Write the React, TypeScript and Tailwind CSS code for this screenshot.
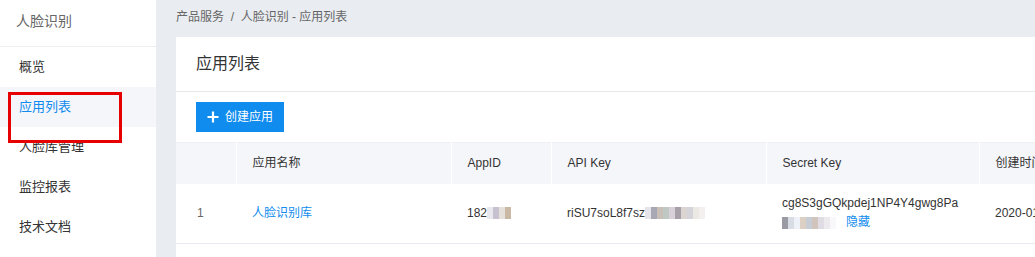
import React from "react";

const menu = ["概览", "应用列表", "人脸库管理", "监控报表", "技术文档"];

function Mosaic({ cells }: { cells: string[] }) {
  return (
    <span className="inline-flex items-center h-[12px]">
      {cells.map((c, i) => (
        <span key={i} className="inline-block w-[6px] h-[12px]" style={{ background: c }} />
      ))}
    </span>
  );
}

export default function App() {
  return (
    <div
      className="relative flex w-[1035px] h-[257px] overflow-hidden bg-[#e9ecf1] text-[12px] text-[#333]"
      style={{ fontFamily: '"Liberation Sans", "Noto Sans CJK SC", sans-serif' }}
    >
      {/* Sidebar */}
      <aside className="w-[156px] shrink-0 bg-white">
        <div className="h-[47px] border-b border-[#eceef2] pl-[16px] flex items-center text-[14px] text-[#666] pb-[3px]">
          人脸识别
        </div>
        <ul>
          {menu.map((m, i) => (
            <li
              key={m}
              className={`h-[40px] flex items-center pl-[19px] text-[13px] ${
                i === 1 ? "bg-[#f5f6fa] text-[#108cee]" : "text-[#333]"
              }`}
            >
              {m}
            </li>
          ))}
        </ul>
      </aside>

      {/* Main */}
      <main className="flex-1 pl-[20px] flex flex-col min-w-0">
        <div className="h-[37px] flex items-center text-[12px] text-[#666] pb-[3px]">
          产品服务&nbsp;&nbsp;/&nbsp;&nbsp;人脸识别 - 应用列表
        </div>
        <section className="flex-1 bg-white overflow-hidden">
          <div className="h-[55px] border-b border-[#e8e8ec] flex items-center pl-[20px] text-[16px] text-[#333]">
            应用列表
          </div>
          <div className="pt-[10px] pl-[20px] pb-[10px]">
            <button className="h-[30px] w-[88px] bg-[#108cee] text-white text-[12px] flex items-center justify-center gap-[6px]">
              <svg width="12" height="12" viewBox="0 0 12 12">
                <path d="M6 0.5v11M0.5 6h11" stroke="white" strokeWidth="2.2" />
              </svg>
              创建应用
            </button>
          </div>
          <table className="w-[923px] min-w-[923px] table-fixed border-collapse text-left whitespace-nowrap">
            <colgroup>
              <col className="w-[60px]" />
              <col className="w-[215px]" />
              <col className="w-[100px]" />
              <col className="w-[215px]" />
              <col className="w-[213px]" />
              <col className="w-[120px]" />
            </colgroup>
            <thead>
              <tr className="h-[41px] bg-[#f5f6fa] border-t border-[#eef0f4]">
                <th className="font-normal border-r border-white"></th>
                <th className="font-normal pl-[16px] border-r border-white">应用名称</th>
                <th className="font-normal pl-[16px] border-r border-white">AppID</th>
                <th className="font-normal pl-[16px] border-r border-white">API Key</th>
                <th className="font-normal pl-[16px] border-r border-white">Secret Key</th>
                <th className="font-normal pl-[16px]">创建时间</th>
              </tr>
            </thead>
            <tbody>
              <tr className="h-[60px] border-b border-[#e8eaf0]">
                <td className="pl-[21px] text-[#666]">1</td>
                <td className="pl-[16px] text-[#108cee]">人脸识别库</td>
                <td className="pl-[16px] text-[#333]">
                  <span className="inline-flex items-center">
                    182
                    <Mosaic cells={["#e8e8ee", "#c8c2d0", "#e6e0da", "#c9b8a4"]} />
                  </span>
                </td>
                <td className="pl-[16px] text-[#333]">
                  <span className="inline-flex items-center">
                    riSU7soL8f7sz
                    <Mosaic
                      cells={["#e4e4ea", "#a8a8b4", "#c8c0b8", "#c0c8c4", "#d8d0d8", "#a8a0a8", "#dcd4d0", "#d4d4da", "#ece8e4", "#f4f0f0"]}
                    />
                  </span>
                </td>
                <td className="pl-[16px] text-[#333] leading-[19px]">
                  <div>cg8S3gGQkpdej1NP4Y4gwg8Pa</div>
                  <div className="flex items-center gap-[10px]">
                    <Mosaic cells={["#9a9aa4", "#d8dce4", "#eef2f8", "#dcd0c4", "#c8ccd4", "#d0c4bc", "#e0dce4", "#eceaee", "#f8f8fa"]} />
                    <span className="text-[#108cee]">隐藏</span>
                  </div>
                </td>
                <td className="pl-[16px] text-[#333]">2020-01-15 10:24:36</td>
              </tr>
            </tbody>
          </table>
        </section>
      </main>

      {/* annotation */}
      <div className="absolute left-[8px] top-[92px] w-[114px] h-[51px] border-[3px] border-[#e60000]" />
    </div>
  );
}
